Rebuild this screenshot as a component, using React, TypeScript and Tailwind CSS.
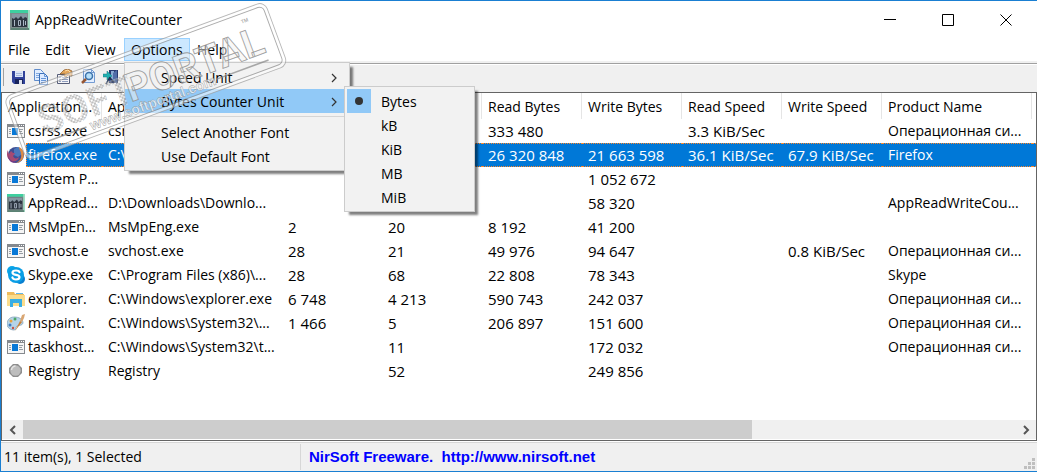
import React from "react";

type Row = {
  icon: string;
  name: string;
  cells: string[];
  selected?: boolean;
};

const columns = [
  "Application...",
  "App",
  "",
  "",
  "Read Bytes",
  "Write Bytes",
  "Read Speed",
  "Write Speed",
  "Product Name",
];

const rows: Row[] = [
  { icon: "exe", name: "csrss.exe", cells: ["csr", "", "", "333 480", "", "3.3 KiB/Sec", "", "Операционная си..."] },
  { icon: "firefox", name: "firefox.exe", cells: ["C:\\", "", "", "26 320 848", "21 663 598", "36.1 KiB/Sec", "67.9 KiB/Sec", "Firefox"], selected: true },
  { icon: "exe", name: "System P...", cells: ["", "", "", "", "1 052 672", "", "", ""] },
  { icon: "app", name: "AppRead...", cells: ["D:\\Downloads\\Downlo...", "", "", "", "58 320", "", "", "AppReadWriteCou..."] },
  { icon: "exe", name: "MsMpEn...", cells: ["MsMpEng.exe", "2", "20", "8 192", "41 200", "", "", ""] },
  { icon: "exe", name: "svchost.e", cells: ["svchost.exe", "28", "21", "49 976", "94 647", "", "0.8 KiB/Sec", "Операционная си..."] },
  { icon: "skype", name: "Skype.exe", cells: ["C:\\Program Files (x86)\\...", "28", "68", "22 808", "78 343", "", "", "Skype"] },
  { icon: "folder", name: "explorer.", cells: ["C:\\Windows\\explorer.exe", "6 748", "4 213", "590 743", "242 037", "", "", "Операционная си..."] },
  { icon: "paint", name: "mspaint.", cells: ["C:\\Windows\\System32\\...", "1 466", "5", "206 897", "151 600", "", "", "Операционная си..."] },
  { icon: "exe", name: "taskhost...", cells: ["C:\\Windows\\System32\\t...", "", "11", "", "172 032", "", "", "Операционная си..."] },
  { icon: "registry", name: "Registry", cells: ["Registry", "", "52", "", "249 856", "", "", ""] },
];

const units = ["Bytes", "kB", "KiB", "MB", "MiB"];

const AppIcon = ({ className }: { className: string }) => (
  <svg className={className} viewBox="0 0 20 20">
    <rect width="20" height="20" fill="#7d8c8c" />
    <rect width="20" height="3" fill="#3ecf9f" />
    <rect x="18" width="2" height="20" fill="#a4dcc4" />
    <rect x="2" y="4" width="15" height="13" fill="#2c3540" />
    <path d="M2 4h15v4l-2-1-2 2-2-3-3 3-2-2-2 2-2-1z" fill="#8796a2" />
    <path d="M4.500 10v6M8.500 10.500h2v5h-2zM13.500 10v6M15.500 11v4" stroke="#aab6c4" fill="none" />
    <rect x="1" y="18" width="18" height="2" fill="#5b8274" />
  </svg>
);

const RowIcon = ({ kind }: { kind: string }) => {
  const cls = "h-[18px] w-[18px] shrink-0";

  if (kind === "app") return <AppIcon className={cls} />;

  if (kind === "firefox")
    return (
      <svg className={cls} viewBox="0 0 18 18">
        <circle cx="9" cy="9" r="8" fill="#3f4f94" />
        <path d="M7 3l4-2 4 3v4l-4 3-4-2z" fill="#4a78bb" />
        <path d="M1 4c0 3 1 4 1 4l2-3 2 2h2l-1 2-1 1c1 3 4 3 6 1-1 4-4 5-7 4-3-1-5-3-5-6C0 7 0 6 1 4z" fill="#a64a72" />
        <path d="M12 1c5 2 6 9 3 13-2 2-4 3-6 3 4-2 6-5 5-9 0-3-2-4-2-7z" fill="#dc8c45" />
        <path d="M1 9c1 5 5 7 9 7-4 2-9 0-9-7z" fill="#793983" />
      </svg>
    );

  if (kind === "skype")
    return (
      <svg className={cls} viewBox="0 0 18 18">
        <circle cx="5" cy="5" r="5" fill="#0aa5e8" />
        <circle cx="13" cy="13" r="5" fill="#087fd0" />
        <circle cx="9" cy="9" r="8" fill="#0a9ee5" />
        <path
          d="M12.500 6.200C12 4.800 10.600 4.500 9 4.500 7 4.500 5.500 5.200 5.500 6.700c0 3 7 1.300 7 4.400 0 1.600-1.500 2.400-3.500 2.400-1.800 0-3.100-.6-3.600-2"
          fill="none"
          stroke="#fff"
          strokeWidth="2.200"
          strokeLinecap="round"
        />
      </svg>
    );

  if (kind === "folder")
    return (
      <svg className={cls} viewBox="0 0 18 18">
        <path d="M0 2h7l1 2h9v12H0z" fill="#eebb5c" />
        <path d="M0 5h18v11H0z" fill="#fbdc8c" />
        <path d="M9 3h7v1H9z" fill="#63b8e8" />
        <path d="M3 9h12v8h-3v-4H6v4H3z" fill="#38aee4" />
      </svg>
    );

  if (kind === "paint")
    return (
      <svg className={cls} viewBox="0 0 18 18">
        <path d="M7 3C2 3 0 7 0 10c0 4 4 6 7 6 3 0 1-3 3-4 2-1 5 0 6-3 0-4-4-6-9-6z" fill="#b5d4e9" stroke="#7899b1" strokeWidth=".7" />
        <circle cx="4" cy="7" r="1.500" fill="#e6a33f" />
        <circle cx="8" cy="5" r="1.500" fill="#4ba866" />
        <circle cx="3" cy="11" r="1.500" fill="#3f7cc3" />
        <circle cx="6" cy="14" r="1.200" fill="#c75345" />
        <path d="M8 17l5-10 2 1z" fill="#c98035" />
        <path d="M13 7l2-6 3-1-1 4-2 4z" fill="#d9a673" />
      </svg>
    );

  if (kind === "registry")
    return (
      <svg className={cls} viewBox="0 0 18 18">
        <path d="M6 2h5l4 4v5l-4 4H6l-4-4V6z" fill="#8e8e8e" />
        <circle cx="8.500" cy="8.500" r="5.200" fill="#bdbdbd" />
        <path d="M4.500 8a4 4 0 0 1 4-4" stroke="#e4e4e4" fill="none" strokeWidth="1.500" />
      </svg>
    );

  return (
    <svg className={cls} viewBox="0 0 18 18" shapeRendering="crispEdges">
      <path d="M0 2h18v14H0z" fill="#85898e" />
      <path d="M1 5h16v10H1z" fill="#f5f5f5" />
      <path d="M12 3h1v1h-1zM14 3h1v1h-1zM16 3h1v1h-1z" fill="#fff" />
      <path d="M5 6h6v7H5z" fill="#0878d7" />
      <path d="M2 7h2v1H2zM2 9h2v1H2zM2 11h2v1H2zM12 7h4v1h-4zM12 9h3v1h-3zM12 11h4v1h-4z" fill="#969da4" />
    </svg>
  );
};

const SaveIcon = () => (
  <svg className="h-4 w-4" viewBox="0 0 16 16">
    <path d="M1 2h13v13H3l-2-2z" fill="#30429a" />
    <path d="M4 2h8v6H4z" fill="#dce5f6" />
    <path d="M5 4.500h6M5 6.500h6" stroke="#a5b7db" />
    <path d="M4 10h8v5H4z" fill="#18245c" />
    <path d="M8 11h3v4H8z" fill="#dde3f1" />
  </svg>
);

const CopyIcon = () => (
  <svg className="h-4 w-4" viewBox="0 0 16 16">
    <path d="M.5.5h6l3 3v8h-9z" fill="#e1eeff" stroke="#608ccb" />
    <path d="M2 4.500h3M2 6.500h3M2 8.500h3" stroke="#80a8df" />
    <path d="M5.500 4.500h5l3 3v8h-8z" fill="#dceaff" stroke="#3d71b9" />
    <path d="M10.500 4.500v3h3M7 9.500h5M7 11.500h5M7 13.500h5" stroke="#6796d7" fill="none" />
  </svg>
);

const PropertiesIcon = () => (
  <svg className="h-4 w-4" viewBox="0 0 16 16">
    <path d="M.5 5.500h12v9H.5z" fill="#f4f4f7" stroke="#555d78" />
    <path d="M2 8.500h2M2 10.500h2M2 12.500h2M5 8.500h6M5 10.500h6M5 12.500h6" stroke="#8e9dbe" />
    <path d="M3 5l4-4 4-1 4 2v5l-4-1-2 2-2-1 1-2H4z" fill="#e2a55b" stroke="#855321" strokeWidth=".7" />
    <path d="M8 2l3-1 2 2" stroke="#ffdda5" fill="none" />
  </svg>
);

const FindIcon = () => (
  <svg className="h-4 w-4" viewBox="0 0 16 16">
    <path d="M3.500.5h8l3 3v10h-11z" fill="#e4efff" stroke="#739bd2" />
    <path d="M11.500.5v3h3" fill="none" stroke="#739bd2" />
    <circle cx="9" cy="7" r="3.500" fill="#b7e0fa" stroke="#3c72aa" strokeWidth="1.500" />
    <path d="M6 10l-4 4" stroke="#965633" strokeWidth="2.500" />
  </svg>
);

const ExitIcon = () => (
  <svg className="h-4 w-4" viewBox="0 0 16 16">
    <path d="M6 1h9v13H6z" fill="#293b71" />
    <path d="M8 2h3v9H8z" fill="#8cadd4" />
    <path d="M10 4l4-3v14l-4-3z" fill="#506da8" />
    <path d="M0 5h4V2l5 5-5 4V8H0z" fill="#20afb0" stroke="#187b83" strokeWidth=".5" />
    <path d="M7 8l-4 7M7 9l4 4" stroke="#203052" strokeWidth="1.500" />
  </svg>
);

const Chevron = () => (
  <svg className="h-2.5 w-1.5" viewBox="0 0 6 10" fill="none" stroke="#333" strokeWidth="1.200">
    <path d="M1 1l4 4-4 4" />
  </svg>
);

const Stamp = () => (
  <svg
    className="pointer-events-none absolute left-0 top-0 z-30 h-[172px] w-[292px]"
    viewBox="0 0 292 172"
    aria-hidden="true"
  >
    <defs>
      <pattern id="mesh" width="4" height="4" patternUnits="userSpaceOnUse">
        <rect x=".5" y=".5" width="3" height="3" rx="1" fill="#fff" fillOpacity=".35" stroke="#888" strokeWidth=".6" />
      </pattern>
    </defs>
    <g transform="translate(2 96) rotate(-20.200)" fill="none">
      {/* Frame */}
      <rect x="2" y="2" width="275" height="65" rx="7" stroke="#fff" strokeOpacity=".5" strokeWidth="3" />
      <rect x="0.500" y="0.500" width="278" height="68" rx="8" stroke="#999" strokeOpacity=".7" strokeWidth=".9" />
      <rect x="4" y="4" width="271" height="61" rx="5" stroke="#888" strokeOpacity=".7" strokeWidth=".9" />
      <path d="M26 57h42M206 57h56" stroke="#888" strokeOpacity=".7" strokeWidth="1.500" />
      <text x="25" y="50" fill="url(#mesh)" className="font-[Roboto] text-[40px] font-bold">
        SOFT
      </text>
      <text
        x="118"
        y="49"
        fill="#f2f2f2"
        fillOpacity=".5"
        stroke="#8a8a8a"
        strokeOpacity=".8"
        strokeWidth=".9"
        className="font-[Roboto] text-[39px] font-bold"
      >
        PORTAL
      </text>
      <text x="249" y="20" fill="#aaa" className="font-[Roboto] text-[14px]">
        ™
      </text>
      <text
        x="72"
        y="62"
        fill="#fff"
        fillOpacity=".7"
        stroke="#888"
        strokeOpacity=".8"
        strokeWidth=".5"
        className="font-['Liberation_Sans'] text-[14px] font-bold"
      >
        www.softportal.com
      </text>
    </g>
  </svg>
);

const OptionsMenu = () => (
  <div
    role="menu"
    className="absolute left-0 top-6 z-10 w-[226px] border border-[#ccc] bg-[#f2f2f2] pb-[2px] pt-[2px] shadow-[4px_4px_2px_-1px_rgba(0,0,0,0.5)]"
  >
    <button role="menuitem" className="flex h-6 w-full items-center justify-between pl-9 pr-3 pt-px">
      Speed Unit
      <Chevron />
    </button>
    <div className="relative">
      <button role="menuitem" className="flex h-6 w-full items-center justify-between bg-[#91c9f7] pl-9 pr-3 pt-px">
        Bytes Counter Unit
        <Chevron />
      </button>
      {/* Submenu */}
      <div
        role="menu"
        className="absolute -top-[3px] left-[219px] w-[131px] border border-[#ccc] bg-[#f2f2f2] p-[2px] shadow-[4px_4px_2px_-1px_rgba(0,0,0,0.5)]"
      >
        {units.map((unit, i) => (
          <button key={unit} role="menuitemradio" aria-checked={i === 0} className="flex h-6 w-full items-center">
            <span className={i === 0 ? "flex h-6 w-6 items-center justify-center bg-[#91c9f7]" : "h-6 w-6"}>
              {i === 0 && <span className="h-2 w-2 rounded-full bg-[#333]" />}
            </span>
            <span className="pl-2.5 pt-px">{unit}</span>
          </button>
        ))}
      </div>
    </div>
    <div className="my-[3px] h-px bg-[#d5d5d5]" />
    <button role="menuitem" className="flex h-6 w-full items-center pl-9 pt-px">
      Select Another Font
    </button>
    <button role="menuitem" className="flex h-6 w-full items-center pl-9 pt-px">
      Use Default Font
    </button>
  </div>
);

const App = () => {
  const cellClass = (row: Row, i: number) => {
    // counters and speeds are set a size larger than names and paths
    const size = i > 0 && i < 7 ? "text-[15px]" : "text-[14px]";
    const look = row.selected
      ? "border-y border-dotted border-[#ff8728] bg-[#0078d7] leading-[22px] text-white"
      : "leading-6";
    return `overflow-hidden whitespace-nowrap p-0 pl-1.5 ${size} ${look}`;
  };

  return (
    <div className="relative flex min-h-screen flex-col overflow-hidden border-b border-l border-t border-[#1a7fd2] bg-white font-['Open_Sans','Noto_Sans',sans-serif] text-[14px] leading-6 text-black">
      {/* Title bar */}
      <header className="flex h-[37px] items-center pl-[9px] pr-[2px]">
        <AppIcon className="h-5 w-5" />
        <h1 className="flex-1 pl-[5px]">AppReadWriteCounter</h1>
        <button aria-label="Minimize" className="flex w-[58px] justify-center">
          <svg className="h-3 w-3" viewBox="0 0 12 12" stroke="#000"><path d="M0 5.500h12" /></svg>
        </button>
        <button aria-label="Maximize" className="flex w-[58px] justify-center">
          <svg className="h-3 w-3" viewBox="0 0 12 12" stroke="#000" fill="none"><path d="M.5.5h11v11H.5z" /></svg>
        </button>
        <button aria-label="Close" className="flex w-[58px] justify-center">
          <svg className="h-3 w-3" viewBox="0 0 12 12" stroke="#000"><path d="M.5.5l11 11M11.500.5l-11 11" /></svg>
        </button>
      </header>

      {/* Menu bar */}
      <nav className="flex h-[23px] items-center">
        <button className="w-[37px] pl-[7px] pt-px text-left">File</button>
        <button className="w-10 pl-[7px] pt-px text-left">Edit</button>
        <button className="w-[46px] pl-[7px] pt-px text-left">View</button>
        <div className="relative h-[23px]">
          <button className="flex h-[23px] w-[66px] items-center border border-[#99d1ff] bg-[#cce8ff] pl-1.5 pt-px">
            Options
          </button>
          <OptionsMenu />
        </div>
        <button className="pl-[7px] pt-px">Help</button>
      </nav>
      <div className="h-[3px] border-b border-[#a0a0a0] bg-[#f0f0f0]" />

      {/* Toolbar */}
      <div className="flex h-7 items-center border-t border-white bg-[#f0f0f0] pb-2 pl-[2px] pt-1">
        <span className="mr-[7px] h-[18px] w-px bg-[#a0a0a0]" />
        <button aria-label="Save" className="w-[23px]"><SaveIcon /></button>
        <button aria-label="Copy" className="w-[23px]"><CopyIcon /></button>
        <button aria-label="Properties" className="w-[23px]"><PropertiesIcon /></button>
        <button aria-label="Find" className="w-[23px]"><FindIcon /></button>
        <button aria-label="Exit" className="w-[23px]"><ExitIcon /></button>
      </div>

      {/* Process list */}
      <main className="flex flex-1 flex-col overflow-hidden border border-[#646464]">
        <div className="flex-1 overflow-hidden">
          <table className="w-full table-fixed border-separate border-spacing-0 text-left">
            <colgroup>
              <col className="w-[100px]" />
              <col className="w-[180px]" />
              <col className="w-[100px]" />
              <col className="w-[100px]" />
              <col className="w-[100px]" />
              <col className="w-[100px]" />
              <col className="w-[100px]" />
              <col className="w-[100px]" />
              <col className="w-[150px]" />
              <col />
            </colgroup>
            <thead>
              <tr className="h-[26px]">
                {columns.map((col, i) => (
                  <th key={i} className="overflow-hidden whitespace-nowrap border-r border-[#e5e5e5] p-0 pl-1.5 pt-[2px] font-normal">
                    {col}
                  </th>
                ))}
                <th className="p-0" />
              </tr>
            </thead>
            <tbody>
              {rows.map((row) => (
                <tr key={row.name} className="h-6">
                  <td className="p-0">
                    <div className="flex h-6 items-center pl-[5px]">
                      <RowIcon kind={row.icon} />
                      <span
                        className={
                          row.selected
                            ? "ml-px h-6 flex-1 whitespace-nowrap border-y border-l border-dotted border-[#ff8728] bg-[#0078d7] pl-px leading-[22px] text-white"
                            : "ml-px flex-1 whitespace-nowrap pl-[2px]"
                        }
                      >
                        {row.name}
                      </span>
                    </div>
                  </td>
                  {[...row.cells, ""].map((cell, i) => (
                    <td key={i} className={cellClass(row, i)}>
                      {cell}
                    </td>
                  ))}
                </tr>
              ))}
            </tbody>
          </table>
        </div>

        {/* Horizontal scroll bar */}
        <div className="mb-px flex h-[19px] bg-[#f0f0f0]">
          <button aria-label="Scroll left" className="flex w-[21px] items-center justify-center">
            <svg className="h-2.5 w-2" viewBox="0 0 8 10" fill="none" stroke="#555" strokeWidth="2"><path d="M6 1L2 5l4 4" /></svg>
          </button>
          <div className="flex-1">
            <div className="h-full w-[73.5%] bg-[#cdcdcd]" />
          </div>
          <button aria-label="Scroll right" className="flex w-[21px] items-center justify-center">
            <svg className="h-2.5 w-2" viewBox="0 0 8 10" fill="none" stroke="#555" strokeWidth="2"><path d="M2 1l4 4-4 4" /></svg>
          </button>
        </div>
      </main>

      {/* Status bar */}
      <footer className="mt-px flex h-[29px] items-center border-t border-[#d7d7d7] bg-[#f0f0f0]">
        <span className="w-[299px] pl-[3px]">11 item(s), 1 Selected</span>
        <span className="h-[26px] w-px bg-[#d7d7d7]" />
        <a
          href="http://www.nirsoft.net"
          className="flex-1 whitespace-pre pl-2 font-['Liberation_Sans',sans-serif] text-[15px] font-bold text-[#0000ff]"
        >
          {"NirSoft Freeware.  http://www.nirsoft.net"}
        </a>
        <svg className="mb-[2px] mr-[2px] h-[11px] w-[11px] self-end" viewBox="0 0 11 11" fill="#bfbfbf">
          <path d="M8 0h3v3H8zM4 4h3v3H4zM8 4h3v3H8zM0 8h3v3H0zM4 8h3v3H4zM8 8h3v3H8z" />
        </svg>
      </footer>

      <Stamp />
    </div>
  );
};

export default App;
